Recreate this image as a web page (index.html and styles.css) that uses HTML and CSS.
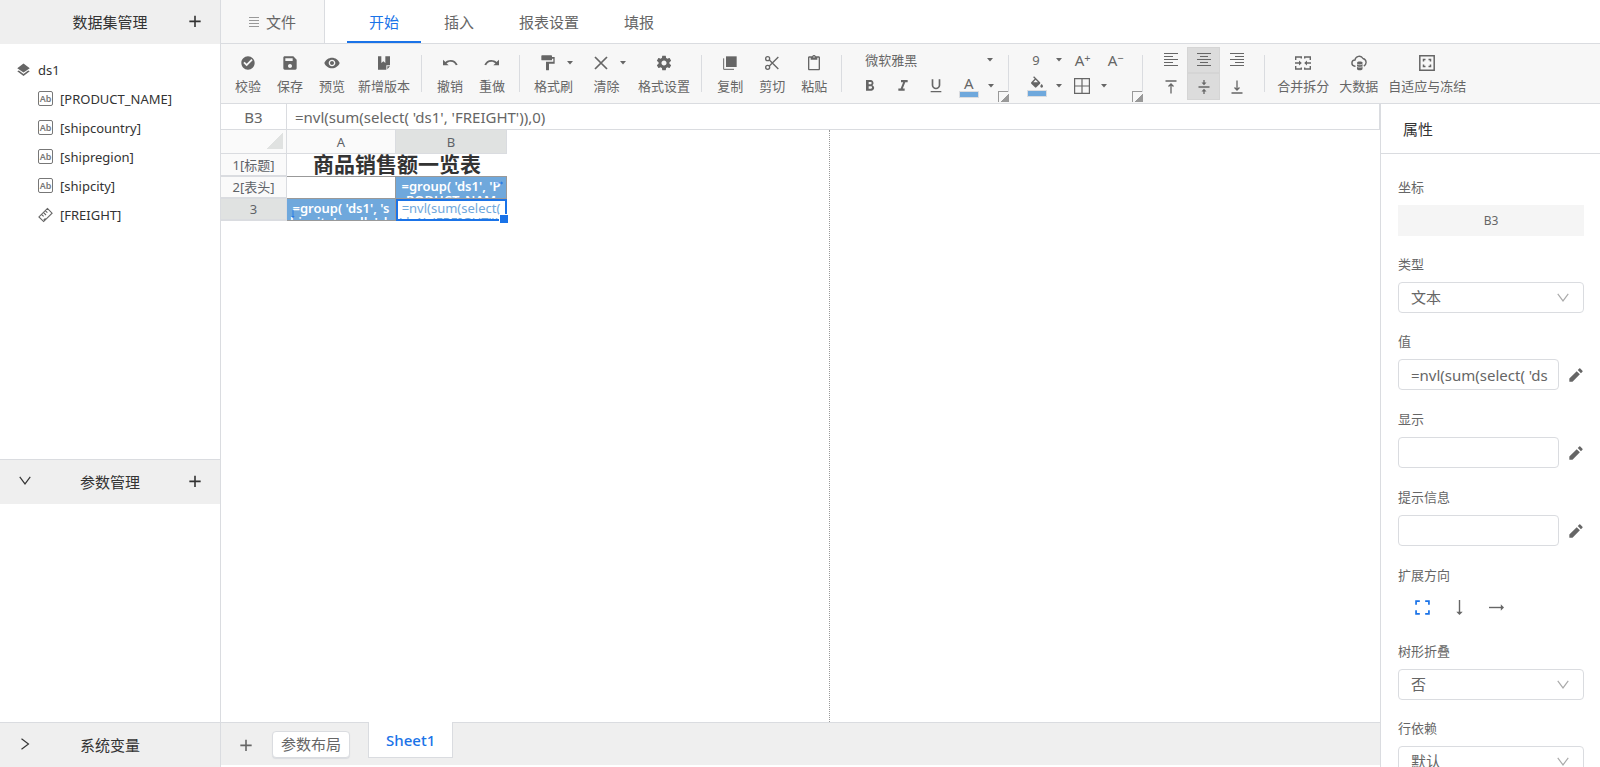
FILE: index.html
```html
<!DOCTYPE html>
<html lang="zh-CN">
<head>
    <meta charset="UTF-8">
    <meta name="viewport" content="width=device-width, initial-scale=1.0">
    <title>报表设计器</title>
    <link rel="stylesheet" href="styles.css">
</head>
<body>
    <!-- shared icon shapes -->
    <svg class="sprite" aria-hidden="true">
        <symbol id="i-plus" viewBox="0 0 24 24"><path d="M12 4v17M3.500 12.500h17" fill="none" stroke="currentColor" stroke-width="2.400"/></symbol>
        <symbol id="i-down" viewBox="0 0 24 24"><path d="M3 5l9 12 9-12" fill="none" stroke="currentColor" stroke-width="2"/></symbol>
        <symbol id="i-right" viewBox="0 0 24 24"><path d="M6 3l12 9-12 9" fill="none" stroke="currentColor" stroke-width="2"/></symbol>
        <symbol id="i-caret" viewBox="0 0 6 4"><path d="M0 0h6L3 3.500z"/></symbol>
        <symbol id="i-menu" viewBox="0 0 10 10"><path d="M0 .5h10M0 3.500h10M0 6.500h10M0 9.500h10" fill="none" stroke="currentColor" stroke-width="1"/></symbol>
        <symbol id="i-layers" viewBox="0 0 24 24"><path d="M11.990 18.540l-7.370-5.730L2 14.070l10 7.500 10-7.500-2.630-1.270-7.380 5.740zM12 16l10-7L12 1.500 2 9z"/></symbol>
        <symbol id="i-ruler" viewBox="0 0 16 16"><path d="M10 1l5 5-9 9-5-5zM4 7.500l2 2M6 5.500l2.500 2.500M8 3.500l2 2M6 13.500l2-2" fill="none" stroke="currentColor" stroke-width="1.200"/></symbol>
        <symbol id="i-check" viewBox="0 0 24 24"><path d="M12 2C6.480 2 2 6.480 2 12s4.480 10 10 10 10-4.480 10-10S17.520 2 12 2zm-2 15l-5-5 1.900-1.900L10 13.200l7.100-7.100L19 8l-9 9z"/></symbol>
        <symbol id="i-save" viewBox="0 0 24 24"><path d="M17 2H4c-1.110 0-2 .9-2 2v16c0 1.100.89 2 2 2h16c1.100 0 2-.9 2-2V7l-5-5zm-5 17.500c-1.660 0-3-1.340-3-3s1.340-3 3-3 3 1.340 3 3-1.340 3-3 3zm4-10.500H5V5h11v4z"/></symbol>
        <symbol id="i-eye" viewBox="0 0 24 24"><path d="M12 4C7 4 2.200 7.300.5 12c1.700 4.700 6.500 8 11.500 8s9.800-3.300 11.500-8C21.800 7.300 17 4 12 4zM12 17c-2.760 0-5-2.240-5-5s2.240-5 5-5 5 2.240 5 5-2.240 5-5 5zm0-8c-1.660 0-3 1.340-3 3s1.340 3 3 3 3-1.340 3-3-1.340-3-3-3z"/></symbol>
        <symbol id="i-version" viewBox="0 0 24 24"><path d="M3 2h5v10l3-2.500 3 2.500V2h7v13.500h-5.500V22H3zM17 17h4l-4 4.500z"/></symbol>
        <symbol id="i-undo" viewBox="0 0 24 24"><path d="M13 7.500c-3 0-5.700 1.100-7.800 2.900L1.500 7v8.500H10l-3.200-3.100C8.500 11 10.600 10 13 10c4 0 6.500 2.300 7.800 5.500l2.700-.8C21.700 10.600 18 7.500 13 7.500z"/></symbol>
        <symbol id="i-redo" viewBox="0 0 24 24"><path d="M11 7.500c3 0 5.700 1.100 7.800 2.900L22.500 7v8.500H14l3.200-3.100C15.500 11 13.400 10 11 10c-4 0-6.500 2.300-7.800 5.500l-2.700-.8C2.300 10.600 6 7.500 11 7.500z"/></symbol>
        <symbol id="i-paint" viewBox="0 0 24 24"><path d="M18 3V1.500c0-.55-.45-1-1-1H3c-.55 0-1 .45-1 1V7c0 .55.45 1 1 1h14c.55 0 1-.45 1-1V5.500h2V10H9v12c0 .55.450 1 1 1h2.500c.55 0 1-.45 1-1V13H22V3h-4z"/></symbol>
        <symbol id="i-clear" viewBox="0 0 24 24"><path d="M3 3l18 18M21 3L3 21" fill="none" stroke="currentColor" stroke-width="2.600"/></symbol>
        <symbol id="i-gear" viewBox="1 1 22 22"><path d="M19.430 12.980c.04-.32.07-.64.07-.98s-.03-.66-.07-.98l2.110-1.650c.19-.15.24-.42.12-.64l-2-3.460c-.12-.22-.39-.3-.61-.22l-2.490 1c-.52-.4-1.080-.73-1.690-.98l-.38-2.650C14.460 2.180 14.250 2 14 2h-4c-.25 0-.46.18-.49.42l-.38 2.650c-.61.25-1.170.59-1.690.98l-2.490-1c-.23-.09-.49 0-.61.22l-2 3.460c-.13.22-.07.49.12.64l2.110 1.650c-.04.32-.07.65-.07.98s.03.66.07.98l-2.110 1.650c-.19.15-.24.42-.12.64l2 3.460c.12.22.39.3.61.22l2.490-1c.52.4 1.080.73 1.690.98l.38 2.650c.03.24.24.42.49.42h4c.25 0 .46-.18.49-.42l.38-2.650c.61-.25 1.170-.59 1.690-.98l2.490 1c.23.09.49 0 .61-.22l2-3.460c.12-.22.07-.49-.12-.64l-2.110-1.650zM12 15.500c-1.930 0-3.500-1.570-3.500-3.500s1.570-3.500 3.500-3.500 3.500 1.570 3.500 3.500-1.570 3.500-3.500 3.500z"/></symbol>
        <symbol id="i-copy" viewBox="0 0 24 24"><path d="M6 2h16v16H6z"/><path d="M2.500 5v16.500H18" fill="none" stroke="currentColor" stroke-width="1.500"/></symbol>
        <symbol id="i-cut" viewBox="0 0 24 24"><g fill="none" stroke="currentColor" stroke-width="2"><circle cx="5.500" cy="5.500" r="3"/><circle cx="5.500" cy="18.500" r="3"/><path d="M8 7.500L21.500 21M8 16.500L21.500 3"/></g></symbol>
        <symbol id="i-paste" viewBox="0 0 24 24"><path d="M19 2h-4.180C14.400.84 13.300 0 12 0c-1.300 0-2.400.84-2.820 2H5c-1.100 0-2 .9-2 2v17c0 1.100.9 2 2 2h14c1.100 0 2-.9 2-2V4c0-1.100-.9-2-2-2zm-7 0c.55 0 1 .45 1 1s-.45 1-1 1-1-.45-1-1 .45-1 1-1zm7 19H5V4h2v3h10V4h2v17z"/></symbol>
        <symbol id="i-bold" viewBox="0 0 24 24"><path d="M15.600 10.790c.97-.67 1.650-1.770 1.650-2.790 0-2.760-1.750-5-4-5H6v16h8.040c2.090 0 4.210-1.700 4.210-4.290 0-1.520-1.360-3.320-2.650-3.920zM10 6h3c.83 0 1.500.67 1.500 1.500S13.830 9.500 13 9.500h-3V6zm3.500 10H10v-3.500h3.500c.83 0 1.500.67 1.500 1.750S14.330 16 13.500 16z"/></symbol>
        <symbol id="i-italic" viewBox="0 0 24 24"><path d="M9 3v3.200h3.210L8.500 15.800H5V19h9.500v-3.200h-2.800l3.700-9.600H19V3z"/></symbol>
        <symbol id="i-underline" viewBox="0 0 24 24"><path d="M12 17c3.310 0 6.500-2.690 6.500-6V2H16v9c0 1.930-1.800 3.700-4 3.700S8 12.930 8 11V2H5.500v9c0 3.310 3.190 6 6.500 6zm-8 2.500v2h16v-2H4z"/></symbol>
        <symbol id="i-fill" viewBox="0 0 24 20"><path d="M16.560 8.940L7.620 0 6.210 1.410l2.380 2.380-5.150 5.150c-.59.59-.59 1.540 0 2.120l5.500 5.500c.29.29.68.44 1.060.44s.77-.15 1.060-.44l5.500-5.500c.59-.58.59-1.530 0-2.120zM6.500 9L10 5.210 13.500 9zM19 11.500s-2 2.170-2 3.500c0 1.100.9 2 2 2s2-.9 2-2c0-1.330-2-3.500-2-3.500z"/></symbol>
        <symbol id="i-border" viewBox="0 0 16 16"><path d="M.6.600h14.800v14.800H.6zM8 .6v14.800M.6 8h14.800" fill="none" stroke="currentColor" stroke-width="1.200"/></symbol>
        <symbol id="i-left" viewBox="0 0 14 14"><path d="M0 .5h14M0 3.500h9M0 6.500h14M0 9.500h9M0 12.500h14" fill="none" stroke="currentColor" stroke-width="1.200"/></symbol>
        <symbol id="i-center" viewBox="0 0 14 14"><path d="M0 .5h14M3 3.500h8M0 6.500h14M3 9.500h8M0 12.500h14" fill="none" stroke="currentColor" stroke-width="1.200"/></symbol>
        <symbol id="i-rightal" viewBox="0 0 14 14"><path d="M0 .5h14M5 3.500h9M0 6.500h14M5 9.500h9M0 12.500h14" fill="none" stroke="currentColor" stroke-width="1.200"/></symbol>
        <symbol id="i-top" viewBox="0 0 14 14"><path d="M1.500 1h11M7 13.500V4M4.500 6.500L7 4l2.500 2.500" fill="none" stroke="currentColor" stroke-width="1.300"/></symbol>
        <symbol id="i-middle" viewBox="0 0 14 14"><path d="M1.500 7h11M7 0v3M7 14v-3" fill="none" stroke="currentColor" stroke-width="1.300"/><path d="M4.500 2.500h5L7 5.200zM4.500 11.500h5L7 8.800z"/></symbol>
        <symbol id="i-bottom" viewBox="0 0 14 14"><path d="M1.500 13h11M7 .5V10M4.500 7.500L7 10l2.500-2.500" fill="none" stroke="currentColor" stroke-width="1.300"/></symbol>
        <symbol id="i-merge" viewBox="0 0 16 14"><path d="M.7 4V1h5.600v1.600M9.700 2.600V1h5.600v3M.7 10v3h5.600v-1.600M9.700 11.400V13h5.600v-3M0 7h5M16 7h-5" fill="none" stroke="currentColor" stroke-width="1.400"/><path d="M4 4.500L6.800 7 4 9.500zM12 4.500L9.200 7 12 9.500z"/></symbol>
        <symbol id="i-cloud" viewBox="0 0 16 16"><path d="M4.500 11.200H4A3.100 3.100 0 0 1 4 5a4.300 4.300 0 0 1 8-1.500A4 4 0 0 1 12.800 11" fill="none" stroke="currentColor" stroke-width="1.400"/><path d="M6 7.500c0-1.500 5.500-1.500 5.500 0v6.500c0 1.800-5.500 1.800-5.500 0z"/><path d="M6 9c1 1 4.500 1 5.500 0M6 11.500c1 1 4.500 1 5.500 0" fill="none" stroke="#f7f7f7" stroke-width=".7"/></symbol>
        <symbol id="i-fit" viewBox="0 0 16 16"><path d="M.8.800h14.400v14.400H.8zM4.500 6.500v-2h2M9.500 4.500h2v2M11.500 9.500v2h-2M6.500 11.500h-2v-2" fill="none" stroke="currentColor" stroke-width="1.500"/></symbol>
        <symbol id="i-edit" viewBox="0 0 24 24"><path d="M2 17.250V22h4.750L17.810 10.940l-4.750-4.750L2 17.250zM21.710 7.040c.39-.39.39-1.020 0-1.410l-3.340-3.340c-.39-.39-1.020-.39-1.410 0l-2.330 2.330 4.750 4.750 2.330-2.330z"/></symbol>
        <symbol id="i-expand" viewBox="0 0 14 14"><path d="M1 4.500V1h3.500M9.500 1H13v3.500M13 9.500V13H9.500M4.500 13H1V9.500" fill="none" stroke="currentColor" stroke-width="1.600"/></symbol>
        <symbol id="i-arrow-d" viewBox="0 0 14 14"><path d="M7 0v12" fill="none" stroke="currentColor" stroke-width="1.300"/><path d="M4 11h6l-3 3z"/></symbol>
        <symbol id="i-arrow-r" viewBox="0 0 14 14"><path d="M0 7h12" fill="none" stroke="currentColor" stroke-width="1.300"/><path d="M11 4v6l3-3z"/></symbol>
    </svg>

    <div class="app">
        <aside class="sidebar">
            <header class="side-head first">
                <h2>数据集管理</h2>
                <button class="add" aria-label="新增数据集"><svg><use href="#i-plus"/></svg></button>
            </header>
            <ul class="tree">
                <li class="root"><svg><use href="#i-layers"/></svg>ds1</li>
                <li><span class="ab">Ab</span>[PRODUCT_NAME]</li>
                <li><span class="ab">Ab</span>[shipcountry]</li>
                <li><span class="ab">Ab</span>[shipregion]</li>
                <li><span class="ab">Ab</span>[shipcity]</li>
                <li><svg><use href="#i-ruler"/></svg>[FREIGHT]</li>
            </ul>
            <header class="side-head">
                <button class="fold" aria-label="折叠"><svg><use href="#i-down"/></svg></button>
                <h2>参数管理</h2>
                <button class="add" aria-label="新增参数"><svg><use href="#i-plus"/></svg></button>
            </header>
            <div class="params"></div>
            <header class="side-head">
                <button class="fold" aria-label="展开"><svg><use href="#i-right"/></svg></button>
                <h2>系统变量</h2>
            </header>
        </aside>

        <div class="main">
            <nav class="tabs">
                <button class="file"><svg><use href="#i-menu"/></svg>文件</button>
                <button class="tab active">开始</button>
                <button class="tab">插入</button>
                <button class="tab">报表设置</button>
                <button class="tab">填报</button>
            </nav>

            <div class="toolbar">
                <div class="group">
                    <button class="tool"><svg><use href="#i-check"/></svg>校验</button>
                    <button class="tool"><svg><use href="#i-save"/></svg>保存</button>
                    <button class="tool"><svg><use href="#i-eye"/></svg>预览</button>
                    <button class="tool wide"><svg><use href="#i-version"/></svg>新增版本</button>
                </div>
                <div class="group">
                    <button class="tool"><svg><use href="#i-undo"/></svg>撤销</button>
                    <button class="tool"><svg><use href="#i-redo"/></svg>重做</button>
                </div>
                <div class="group">
                    <button class="tool drop"><svg><use href="#i-paint"/></svg><svg class="caret"><use href="#i-caret"/></svg><span>格式刷</span></button>
                    <button class="tool drop"><svg><use href="#i-clear"/></svg><svg class="caret"><use href="#i-caret"/></svg><span>清除</span></button>
                    <button class="tool wide"><svg><use href="#i-gear"/></svg>格式设置</button>
                </div>
                <div class="group">
                    <button class="tool"><svg><use href="#i-copy"/></svg>复制</button>
                    <button class="tool"><svg><use href="#i-cut"/></svg>剪切</button>
                    <button class="tool"><svg><use href="#i-paste"/></svg>粘贴</button>
                </div>
                <div class="group font-group">
                    <div class="line">
                        <label class="pick font-pick">
                            <select aria-label="字体"><option>微软雅黑</option></select>
                            <svg class="caret"><use href="#i-caret"/></svg>
                        </label>
                    </div>
                    <div class="line">
                        <button class="mini" aria-label="加粗"><svg><use href="#i-bold"/></svg></button>
                        <button class="mini" aria-label="斜体"><svg><use href="#i-italic"/></svg></button>
                        <button class="mini" aria-label="下划线"><svg><use href="#i-underline"/></svg></button>
                        <button class="mini swatch" aria-label="字体颜色">A</button>
                        <button class="more" aria-label="更多颜色"><svg class="caret"><use href="#i-caret"/></svg></button>
                    </div>
                    <button class="corner" aria-label="字体设置"></button>
                </div>
                <div class="group size-group">
                    <div class="line">
                        <label class="pick size-pick">
                            <select aria-label="字号"><option>9</option></select>
                            <svg class="caret"><use href="#i-caret"/></svg>
                        </label>
                        <button class="mini" aria-label="增大字号">A<sup>+</sup></button>
                        <button class="mini" aria-label="减小字号">A<sup>−</sup></button>
                    </div>
                    <div class="line">
                        <button class="mini swatch" aria-label="填充颜色"><svg><use href="#i-fill"/></svg></button>
                        <button class="more" aria-label="更多填充"><svg class="caret"><use href="#i-caret"/></svg></button>
                        <button class="mini" aria-label="边框"><svg><use href="#i-border"/></svg></button>
                        <button class="more" aria-label="更多边框"><svg class="caret"><use href="#i-caret"/></svg></button>
                    </div>
                    <button class="corner" aria-label="单元格设置"></button>
                </div>
                <div class="group aligns">
                    <button aria-label="左对齐"><svg><use href="#i-left"/></svg></button>
                    <button class="on" aria-label="居中"><svg><use href="#i-center"/></svg></button>
                    <button aria-label="右对齐"><svg><use href="#i-rightal"/></svg></button>
                    <button aria-label="顶端对齐"><svg><use href="#i-top"/></svg></button>
                    <button class="on" aria-label="垂直居中"><svg><use href="#i-middle"/></svg></button>
                    <button aria-label="底端对齐"><svg><use href="#i-bottom"/></svg></button>
                </div>
                <div class="group">
                    <button class="tool wide"><svg><use href="#i-merge"/></svg>合并拆分</button>
                    <button class="tool wide"><svg><use href="#i-cloud"/></svg>大数据</button>
                    <button class="tool wide"><svg><use href="#i-fit"/></svg>自适应与冻结</button>
                </div>
            </div>

            <div class="work">
                <section class="editor">
                    <div class="formula">
                        <output class="cell-name">B3</output>
                        <input type="text" aria-label="公式" value="=nvl(sum(select( 'ds1', 'FREIGHT')),0)">
                    </div>
                    <div class="canvas">
                        <div class="page">
                            <table class="grid">
                                <colgroup><col class="c-head"><col class="c-a"><col class="c-b"></colgroup>
                                <thead>
                                    <tr><th class="all"></th><th>A</th><th class="cur">B</th></tr>
                                </thead>
                                <tbody>
                                    <tr><th>1[标题]</th><td class="title" colspan="2"><div>商品销售额一览表</div></td></tr>
                                    <tr><th>2[表头]</th><td></td><td class="blue"><div>=group( 'ds1', 'PRODUCT_NAME')</div><svg class="mark right"><use href="#i-arrow-r"/></svg></td></tr>
                                    <tr><th class="cur">3</th><td class="blue"><div>=group( 'ds1', 'shipcity', null, 'shipcity')</div><svg class="mark down"><use href="#i-arrow-d"/></svg></td><td class="picked"><div>=nvl(sum(select( 'ds1', 'FREIGHT')),0)</div></td></tr>
                                </tbody>
                            </table>
                        </div>
                    </div>
                    <footer class="sheets">
                        <button class="add-sheet" aria-label="新增Sheet"><svg><use href="#i-plus"/></svg></button>
                        <button class="param-layout">参数布局</button>
                        <button class="sheet">Sheet1</button>
                    </footer>
                </section>

                <aside class="props">
                    <h2>属性</h2>
                    <form>
                        <div class="field">
                            <label for="coord">坐标</label>
                            <output class="coord" id="coord">B3</output>
                        </div>
                        <div class="field">
                            <label for="type">类型</label>
                            <div class="choose">
                                <select id="type"><option>文本</option></select>
                                <svg><use href="#i-down"/></svg>
                            </div>
                        </div>
                        <div class="field edit">
                            <label for="value">值</label>
                            <div class="row">
                                <input type="text" id="value" value="=nvl(sum(select( 'ds1', 'FREIGHT')),0)">
                                <button type="button" aria-label="编辑值"><svg><use href="#i-edit"/></svg></button>
                            </div>
                        </div>
                        <div class="field edit">
                            <label for="display">显示</label>
                            <div class="row">
                                <input type="text" id="display">
                                <button type="button" aria-label="编辑显示"><svg><use href="#i-edit"/></svg></button>
                            </div>
                        </div>
                        <div class="field edit">
                            <label for="tip">提示信息</label>
                            <div class="row">
                                <input type="text" id="tip">
                                <button type="button" aria-label="编辑提示信息"><svg><use href="#i-edit"/></svg></button>
                            </div>
                        </div>
                        <div class="field" role="group" aria-labelledby="dir">
                            <span class="name" id="dir">扩展方向</span>
                            <div class="dirs">
                                <button type="button" class="on" aria-label="不扩展"><svg><use href="#i-expand"/></svg></button>
                                <button type="button" aria-label="纵向"><svg><use href="#i-arrow-d"/></svg></button>
                                <button type="button" aria-label="横向"><svg><use href="#i-arrow-r"/></svg></button>
                            </div>
                        </div>
                        <div class="field">
                            <label for="fold">树形折叠</label>
                            <div class="choose">
                                <select id="fold"><option>否</option></select>
                                <svg><use href="#i-down"/></svg>
                            </div>
                        </div>
                        <div class="field">
                            <label for="rowdep">行依赖</label>
                            <div class="choose">
                                <select id="rowdep"><option>默认</option></select>
                                <svg><use href="#i-down"/></svg>
                            </div>
                        </div>
                    </form>
                </aside>
            </div>
        </div>
    </div>
</body>
</html>
```

FILE: styles.css
```css
* {
    box-sizing: border-box;
}
body {
    margin: 0;
    font-family: "Noto Sans", "Noto Sans CJK SC", sans-serif;
    font-size: 13px;
    color: #666;
    background: #fff;
}
button, input, select {
    font: inherit;
    color: inherit;
    margin: 0;
    padding: 0;
    border: 0;
    background: none;
    appearance: none;
}
h2 {
    margin: 0;
    font-size: 15px;
    font-weight: 400;
    color: #333;
}
svg {
    display: block;
    width: 16px;
    height: 16px;
    fill: currentColor;
}
.sprite {
    display: none;
}
.app {
    display: flex;
    height: 100vh;
    overflow: hidden;
}

/* left side */
.sidebar {
    display: flex;
    flex-direction: column;
    width: 221px;
    flex-shrink: 0;
    border-right: 1px solid #dadce0;
}
.side-head {
    display: grid;
    grid-template-columns: 50px 1fr 50px;
    align-items: center;
    height: 45px;
    padding-bottom: 2px;
    border-top: 1px solid #dadce0;
    background: #efefef;
    color: #333;
}
.side-head.first {
    height: 44px;
    border-top: 0;
}
.side-head h2 {
    grid-column: 2;
    grid-row: 1;
    text-align: center;
}
.side-head button {
    justify-self: center;
}
.side-head .add {
    grid-column: 3;
    grid-row: 1;
}
.side-head .fold svg {
    width: 14px;
    height: 14px;
}
.tree {
    flex: 13 1 0;
    margin: 0;
    padding: 11px 0 0;
    list-style: none;
    color: #333;
}
.tree li {
    display: flex;
    align-items: center;
    gap: 7px;
    height: 29px;
    padding-left: 38px;
}
.tree .root {
    padding-left: 16px;
}
.tree svg {
    width: 15px;
    color: #666;
}
.ab {
    width: 15px;
    height: 15px;
    border: 1px solid #777;
    border-radius: 2px;
    font-size: 9px;
    line-height: 13px;
    font-weight: 600;
    text-align: center;
    color: #777;
}
.params {
    flex: 7 1 0;
}

/* top tabs */
.main {
    display: flex;
    flex-direction: column;
    flex: 1;
    min-width: 0;
}
.tabs {
    display: flex;
    height: 44px;
    border-bottom: 1px solid #dadce0;
    font-size: 15px;
}
.file {
    display: flex;
    align-items: center;
    justify-content: center;
    gap: 7px;
    width: 104px;
    margin-right: 22px;
    border-right: 1px solid #dadce0;
    background: #f7f7f7;
}
.file svg {
    width: 10px;
    height: 10px;
    color: #999;
}
.tab {
    padding: 0 22px;
    margin-right: 1px;
    border-top: 2px solid transparent;
    border-bottom: 2px solid transparent;
}
.tab.active {
    color: #1a73e8;
    border-bottom-color: #1a73e8;
}

/* toolbar */
.toolbar {
    display: flex;
    height: 60px;
    padding-left: 6px;
    border-bottom: 1px solid #dadce0;
    background: #f7f7f7;
    white-space: nowrap;
}
.group {
    display: flex;
    position: relative;
    padding-right: 7px;
    margin-right: 7px;
}
.group:not(:last-child)::after {
    content: "";
    position: absolute;
    top: 11px;
    right: 0;
    width: 1px;
    height: 37px;
    background: #dadce0;
}
.tool {
    display: flex;
    flex-direction: column;
    align-items: center;
    gap: 5px;
    padding: 11px 8px 0;
    line-height: 20px;
}
.tool.wide {
    padding: 11px 5px 0;
}
.tool.drop {
    display: grid;
    grid-template-columns: 1fr 6px;
    justify-items: center;
    align-content: start;
    column-gap: 6px;
    min-width: 53px;
    padding: 11px 7px 0;
}
.tool.drop span {
    grid-column: 1 / 3;
}
.caret {
    width: 6px;
    height: 4px;
    align-self: center;
}
.font-group, .size-group {
    flex-direction: column;
    padding: 3px 0 0;
}
.line {
    display: flex;
    align-items: center;
    height: 26px;
}
.pick {
    display: grid;
    grid-template-columns: 1fr 6px;
    align-items: center;
}
.pick select {
    grid-column: 1 / 3;
    grid-row: 1;
    width: 100%;
}
.pick .caret {
    grid-column: 2;
    grid-row: 1;
    pointer-events: none;
}
.font-group {
    width: 160px;
    padding-left: 4px;
}
.font-pick {
    width: 128px;
    margin-left: 12px;
}
.size-group {
    width: 127px;
    padding-left: 4px;
}
.size-pick {
    width: 30px;
    margin: 0 4px 0 12px;
}
.mini {
    display: flex;
    flex-direction: column;
    align-items: center;
    justify-content: center;
    width: 33px;
    height: 26px;
    font-size: 15px;
}
.size-group .mini:not(.swatch) {
    flex-direction: row;
}
.mini sup {
    font-size: 11px;
    line-height: 11px;
    margin-bottom: 6px;
}
.swatch {
    line-height: 16px;
}
.swatch::after {
    content: "";
    width: 18px;
    height: 5px;
    border: 1px solid #dadce0;
    background: #6fa8dc;
}
.swatch svg {
    height: 14px;
}
.more {
    width: 12px;
    height: 26px;
}
.more .caret {
    margin: 0 auto;
}
.corner {
    position: absolute;
    right: 0;
    bottom: 1px;
    width: 11px;
    height: 11px;
    border-top: 1px solid #999;
    border-left: 1px solid #999;
    background: linear-gradient(135deg, transparent 60%, #999 60%);
}
.group.aligns {
    display: grid;
    grid-template-columns: repeat(3, 33px);
    grid-template-rows: 26px 27px;
    align-content: start;
    margin-left: 4px;
    margin-right: 7px;
    padding: 3px 12px 0 0;
}
.aligns button {
    display: grid;
    place-items: center;
}
.aligns svg {
    width: 14px;
    height: 14px;
}
.aligns .on {
    background: #dcdcdc;
    border: 1px solid #d5d5d5;
}

/* formula bar and sheet */
.work {
    display: flex;
    flex: 1;
    min-height: 0;
}
.editor {
    display: flex;
    flex-direction: column;
    flex: 1;
    min-width: 0;
}
.formula {
    display: flex;
    height: 26px;
    border-bottom: 1px solid #dadce0;
    border-right: 1px solid #dadce0;
    font-size: 15px;
    line-height: 26px;
}
.cell-name {
    width: 66px;
    border-right: 1px solid #dadce0;
    text-align: center;
}
.formula input {
    flex: 1;
    padding: 0 8px;
}
.canvas {
    flex: 1;
    min-height: 0;
}
.page {
    width: 609px;
    height: 100%;
    border-right: 1px dotted #999;
}
.grid {
    width: 286px;
    table-layout: fixed;
    border-collapse: separate;
    border-spacing: 0;
    color: #5f6368;
}
.c-head {
    width: 66px;
}
.c-a {
    width: 109px;
}
.c-b {
    width: 111px;
}
.grid th {
    height: 22px;
    padding: 0;
    border-right: 1px solid #dadce0;
    border-bottom: 2px solid #dadce0;
    background: #fafafa;
    font-weight: 400;
    line-height: 20px;
}
.grid thead th {
    height: 24px;
    border-bottom-width: 1px;
}
.grid .all {
    background: linear-gradient(135deg, transparent 50%, #e0e2e1 50%) no-repeat 45px 2px / 17px 17px #fafafa;
}
.grid .cur {
    background: #e0e2e1;
}
.grid td {
    position: relative;
    padding: 0;
    border-bottom: 1px solid #999;
    border-right: 1px solid #999;
}
.grid td div {
    height: 21px;
    padding: 2px 3px 0;
    overflow: hidden;
    line-height: 14px;
    text-align: center;
    word-break: break-all;
}
.grid .title {
    border-right: 0;
}
.grid .title div {
    height: 22px;
    padding: 0;
    font-size: 21px;
    font-weight: 700;
    line-height: 20px;
    color: #333;
}
.grid .blue {
    background: #6fa8dc;
    color: #fff;
    font-weight: 600;
}
.grid .picked {
    color: #6fa8dc;
    outline: 2px solid #1a73e8;
    outline-offset: -2px;
}
.picked::after {
    content: "";
    position: absolute;
    right: -3px;
    bottom: -4px;
    width: 8px;
    height: 8px;
    border: 1px solid #fff;
    background: #1a73e8;
}
.mark {
    position: absolute;
    width: 8px;
    height: 8px;
    color: #1a73e8;
}
.mark.right {
    top: 2px;
    right: 3px;
}
.mark.down {
    left: 2px;
    bottom: 2px;
}
.sheets {
    display: flex;
    align-items: flex-start;
    height: 43px;
    margin-bottom: 2px;
    border-top: 1px solid #dadce0;
    background: #efefef;
    font-size: 15px;
}
.add-sheet {
    margin: 14px 18px 0 17px;
}
.param-layout {
    height: 27px;
    margin: 8px 18px 0 0;
    padding: 0 8px;
    border: 1px solid #dadce0;
    border-radius: 4px;
    background: #fff;
    box-shadow: 0 1px 1px #dadce0;
    line-height: 25px;
}
.sheet {
    height: 36px;
    margin-top: -1px;
    padding: 0 17px;
    border: 1px solid #dadce0;
    border-top: 0;
    background: #fff;
    color: #1a73e8;
    font-weight: 500;
}

/* property panel */
.props {
    width: 220px;
    border-left: 1px solid #dadce0;
    overflow: hidden;
}
.props h2 {
    height: 50px;
    padding-left: 22px;
    border-bottom: 1px solid #dadce0;
    line-height: 50px;
}
.props form {
    padding: 23px 16px 0 17px;
}
.field {
    margin-bottom: 18px;
}
.field.edit {
    margin-bottom: 19px;
}
.field label, .field .name {
    display: block;
    height: 20px;
    margin-bottom: 8px;
    line-height: 20px;
}
.coord {
    display: block;
    height: 31px;
    background: #f5f5f5;
    font-size: 12px;
    line-height: 31px;
    text-align: center;
}
.choose {
    display: grid;
    grid-template-columns: 1fr 28px;
    align-items: center;
}
.choose select {
    grid-column: 1 / 3;
    grid-row: 1;
}
.choose svg {
    grid-column: 2;
    grid-row: 1;
    width: 14px;
    height: 14px;
    color: #aaa;
    pointer-events: none;
}
.choose select, .row input {
    height: 31px;
    padding: 0 12px 2px;
    border: 1px solid #dadce0;
    border-radius: 4px;
    background: #fff;
    font-size: 15px;
}
.row {
    display: flex;
    justify-content: space-between;
    align-items: center;
}
.row input {
    width: 161px;
    padding: 0 10px 0 12px;
}
.dirs {
    display: flex;
    height: 30px;
    padding-left: 17px;
    gap: 22px;
}
.dirs button {
    height: 28px;
}
.dirs svg {
    width: 15px;
    height: 15px;
}
.dirs .on {
    color: #1a73e8;
}
```
